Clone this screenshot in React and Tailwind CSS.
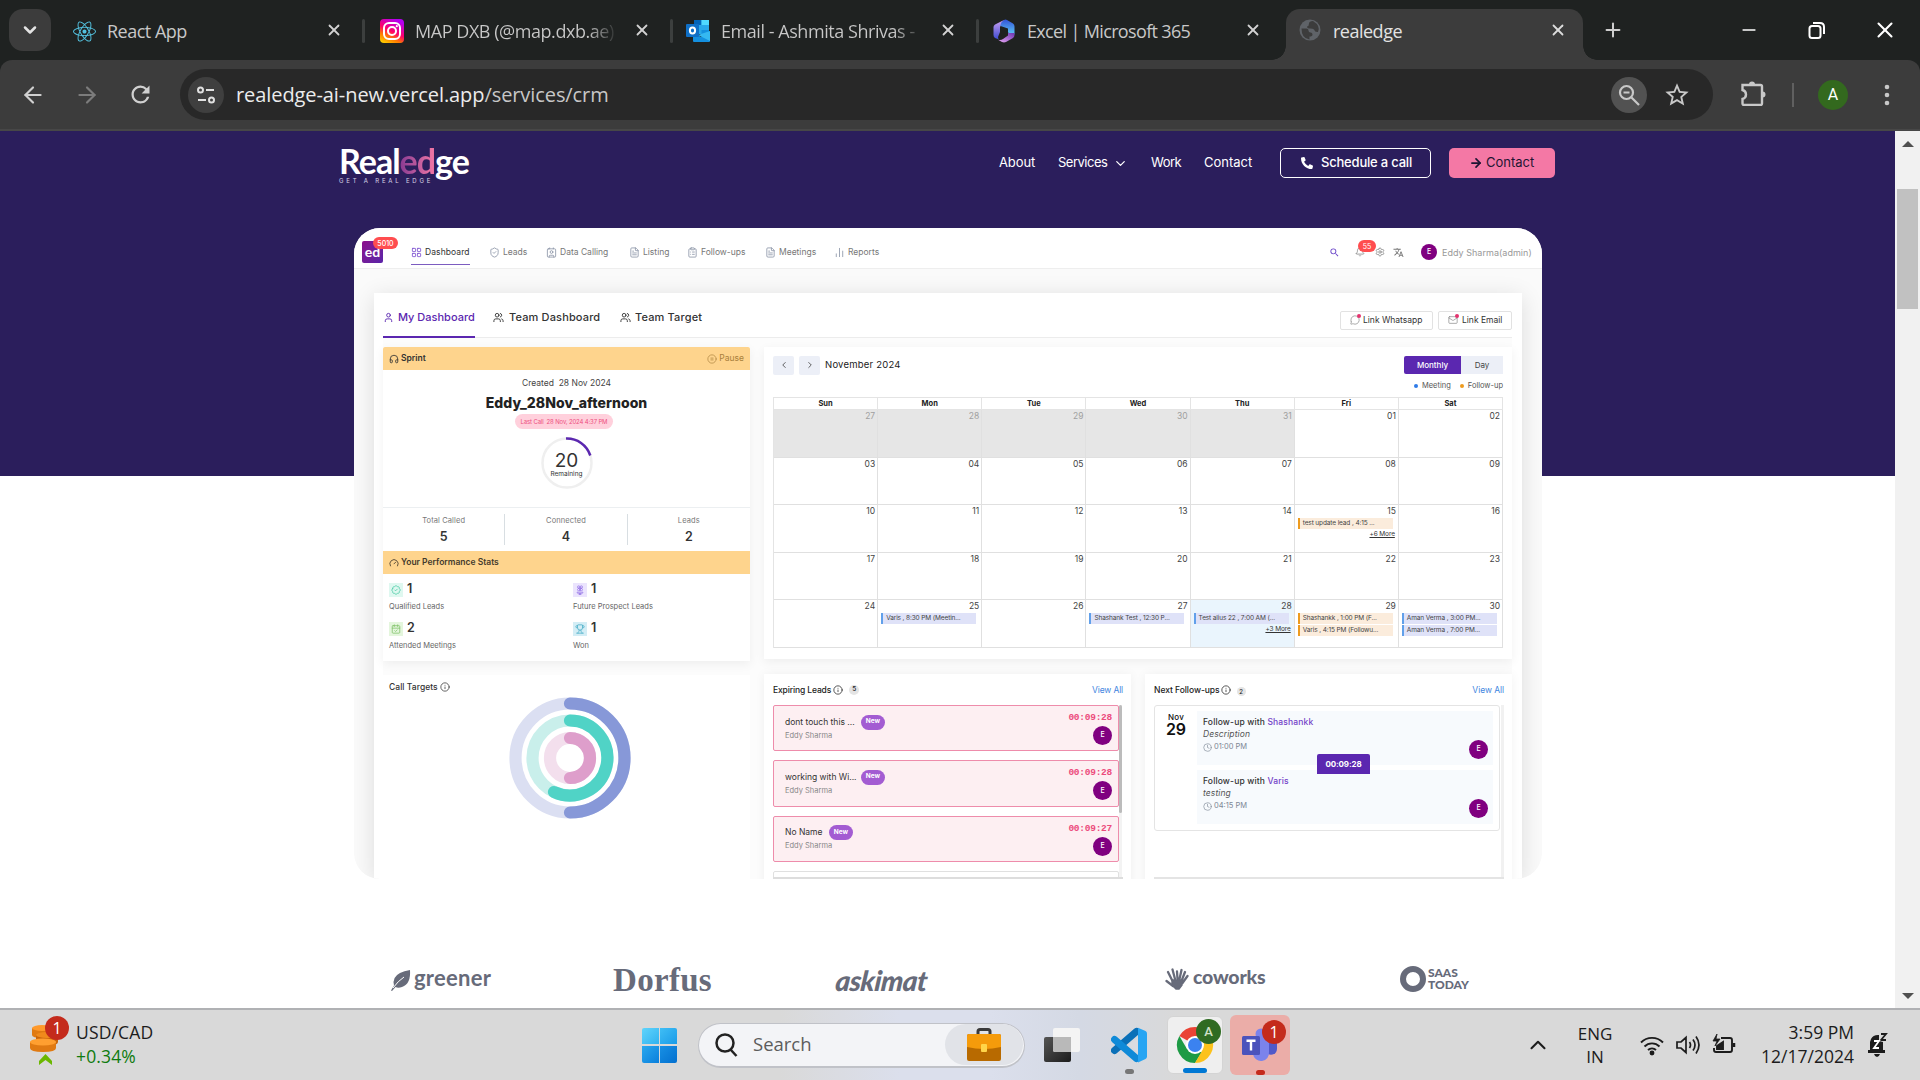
import React from "react";
import {
  ArrowLeft, ArrowRight, X, Plus, ChevronDown, ChevronUp, Minus, LayoutGrid, ShieldCheck,
  Contact, FileText, ClipboardList, BarChart2, Bell, Settings, User, Users, Info, Clock, Headphones,
  CirclePause, Gauge, BadgeCheck, Flower2, CalendarCheck, Trophy, ChevronLeft, ChevronRight, Mail, MessageCircle,
} from "lucide-react";
import { FaReact, FaPhoneAlt } from "react-icons/fa";
import { MdTranslate, MdRefresh, MdStarBorder, MdSearch } from "react-icons/md";

/* ---------- logos ---------- */

const InstagramLogo = () => (
  <svg width="24" height="24" viewBox="0 0 24 24">
    <defs>
      <linearGradient id="ig" x1="0.1" y1="1" x2="0.6" y2="0">
        <stop offset="0" stopColor="#ffd600" /><stop offset=".3" stopColor="#ff7a00" />
        <stop offset=".55" stopColor="#ff0169" /><stop offset="1" stopColor="#b500f0" />
      </linearGradient>
    </defs>
    <rect width="24" height="24" rx="4" fill="url(#ig)" />
    <rect x="4" y="4" width="16" height="16" rx="5" fill="none" stroke="#fff" strokeWidth="2" />
    <circle cx="12" cy="12" r="4" fill="none" stroke="#fff" strokeWidth="2" />
    <circle cx="16.8" cy="7.2" r="1.1" fill="#fff" />
  </svg>
);

const OutlookLogo = () => (
  <svg width="24" height="24" viewBox="0 0 24 24">
    <rect x="8" y="1" width="15" height="14" rx="1" fill="#28a8ea" />
    <path d="M8 1h7.500v5H8z" fill="#0364b8" /><path d="M15.500 1H23v5h-7.500z" fill="#50d9ff" />
    <path d="M15.500 11H23v4h-7.500z" fill="#1490df" />
    <path d="M7 13l8 5 9-6v10a1 1 0 0 1-1 1H8a1 1 0 0 1-1-1z" fill="#1490df" />
    <path d="M24 12v10L12 16z" fill="#35b8f1" />
    <rect x="0" y="5" width="13" height="13" rx="1" fill="#0f6fc6" />
    <ellipse cx="6.500" cy="11.500" rx="2.600" ry="3.100" fill="none" stroke="#fff" strokeWidth="2" />
  </svg>
);

const M365Logo = () => (
  <svg width="24" height="24" viewBox="0 0 24 24">
    <defs>
      <linearGradient id="ma" x1="0" y1="0" x2="0" y2="1"><stop offset="0" stopColor="#c9a0f2" /><stop offset="1" stopColor="#3b4ad0" /></linearGradient>
      <linearGradient id="mb" x1="0" y1="0" x2="0" y2="1"><stop offset="0" stopColor="#3454d8" /><stop offset="1" stopColor="#5fd0f8" /></linearGradient>
      <linearGradient id="mc" x1="0" y1="1" x2="1" y2="0"><stop offset="0" stopColor="#e9a8f5" /><stop offset="1" stopColor="#6a34b0" /></linearGradient>
    </defs>
    <path d="M12 1 3 5.500Q1.500 6.500 1.500 8v8q0 2 1.500 3l4 1.500q-1-1-1-2.500l2-5V8z" fill="url(#ma)" />
    <path d="M12 1q1.500-.8 3 0l6 3.500q1.500 1 1.500 3V14q0 1.500-1 2.500l-5.500-3V9.500L8.500 7q0-4 3.500-6z" fill="url(#mb)" />
    <path d="M22.500 14v2q0 2-1.500 3l-7 4q-2 .8-4 0l-4-2.300q3 .8 5-.7l5-3.500V14z" fill="url(#mc)" />
  </svg>
);

const Globe = () => (
  <svg width="22" height="22" viewBox="0 0 22 22">
    <circle cx="11" cy="11" r="10.500" fill="#5f6368" />
    <path d="M2.500 9.500h5q2 0 2 2t2 2q2 0 2 2t-3 2v3q-8-1-8-11zM14 2q-4 0-4 2.500T8 7.500q0 2 3 2t4 1q1 3 4 2.500 3-6-5-11z" fill="#3c3c3c" />
  </svg>
);

const VSCode = () => (
  <svg width="36" height="36" viewBox="0 0 36 36" fill="none">
    <path d="M25.500 4.500 3.500 23.500" stroke="#0a70b8" strokeWidth="7" strokeLinecap="round" />
    <path d="M3.500 12.500 25.500 31.500" stroke="#0f8ad8" strokeWidth="7" strokeLinecap="round" />
    <path d="M27 10.500v15L18 18z" fill="#d9dbe0" />
    <path d="M27 .8 34.500 4q1.500.8 1.500 2.500v23q0 1.700-1.500 2.500L27 35.600z" fill="#27a5f3" />
  </svg>
);

const Chrome = () => (
  <svg width="38" height="38" viewBox="0 0 38 38">
    <path d="M19 19 3.400 10A18 18 0 0 1 34.600 10z" fill="#ea4335" />
    <path d="M11 23 3.400 10A18 18 0 0 0 19 37l7-11z" fill="#1e9b45" />
    <path d="M19 37A18 18 0 0 0 34.600 10H19l7.800 13.500z" fill="#fcc21b" />
    <circle cx="19" cy="19" r="9" fill="#fff" /><circle cx="19" cy="19" r="7" fill="#3b82f0" />
  </svg>
);

const Teams = () => (
  <svg width="36" height="34" viewBox="0 0 36 34">
    <circle cx="19" cy="6" r="5.500" fill="#7b83eb" />
    <path d="M24 12h11v9a6 6 0 0 1-9 5z" fill="#5059c9" />
    <path d="M11 11h16v13a8 8 0 0 1-16 2z" fill="#7b83eb" />
    <rect x="0" y="8" width="18" height="19" rx="1.500" fill="#4b53bc" />
    <path d="M4.500 12.800h9M9 12.800V22.500" stroke="#fff" strokeWidth="2.400" />
  </svg>
);

const Coins = () => (
  <svg width="30" height="44" viewBox="0 0 30 44">
    <path d="M2 4v7q0 3 10 3t10-3V4z" fill="#e07a12" /><ellipse cx="12" cy="4" rx="10" ry="3" fill="#ff9a2b" />
    <path d="M6 11v7q0 3.500 11 3.500T28 18v-7z" fill="#c9650a" /><ellipse cx="17" cy="11" rx="11" ry="3" fill="#f08a1c" />
    <path d="M0 18v6q0 4 13 4t13-4v-6z" fill="#e07a12" /><ellipse cx="13" cy="18" rx="13" ry="3.500" fill="#ff9f30" />
    <path d="m9 41 6.500-5 6.500 5v-4l-6.500-7L9 37z" fill="#6bb700" />
  </svg>
);

const Briefcase = () => (
  <svg width="36" height="34" viewBox="0 0 36 34">
    <path d="M12 7V3.500q0-2 2-2h8q2 0 2 2V7" fill="none" stroke="#3a3a3a" strokeWidth="3" />
    <rect x="1" y="6" width="34" height="27" rx="2" fill="#b86a00" />
    <path d="M1 8q0-2 2-2h30q2 0 2 2v11q-17 4-34 0z" fill="#f59b0b" />
    <rect x="15" y="16" width="6" height="8" rx="1" fill="#ffd54a" />
  </svg>
);

/* ---------- browser ---------- */

function Tab({ icon, title, fade }) {
  return (
    <div className="flex h-full w-[306px] items-center pt-0.5">
      <span className="flex w-6 justify-center">{icon}</span>
      <span className={fade ? "ml-[11px] w-[203px] whitespace-nowrap bg-[linear-gradient(90deg,#c8c8c8_85%,transparent)] bg-clip-text text-[18px] tracking-[-0.45px] text-transparent" : "ml-[11px] w-[203px] whitespace-nowrap text-[18px] tracking-[-0.5px] text-[#c8c8c8]"}>{title}</span>
      <X className="mb-0.5 ml-[15px]" size={18} strokeWidth={2.4} color="#d2d2d2" />
      <span className="ml-[19px] h-6 w-[3px] rounded bg-[#3c3f3e]" />
    </div>
  );
}

function BrowserChrome() {
  return (
    <header className="h-[131px] bg-[#1f2221] font-['Open_Sans','Noto_Sans',sans-serif]">
      <div className="flex h-[60px] items-center">
        <div className="ml-[9px] flex h-[42px] w-[42px] items-center justify-center rounded-[14px] bg-[#3c3c3c]">
          <ChevronDown size={20} strokeWidth={3} color="#e4e4e4" />
        </div>
        <div className="ml-[21px] flex h-full">
          <Tab icon={<FaReact size={23} color="#53c1de" />} title="React App" />
          <div className="flex pl-0.5"><Tab icon={<InstagramLogo />} title="MAP DXB (@map.dxb.ae)" fade /></div>
          <Tab icon={<OutlookLogo />} title="Email - Ashmita Shrivas -" fade />
          <div className="flex h-full w-[294px] items-center pt-0.5">
            <span className="flex w-6 justify-center"><M365Logo /></span>
            <span className="ml-[11px] w-[202px] whitespace-nowrap text-[18px] tracking-[-0.65px] text-[#c8c8c8]">Excel | Microsoft 365</span>
            <X className="mb-0.5 ml-[15px]" size={18} strokeWidth={2.4} color="#d2d2d2" />
          </div>
        </div>
        <div className="relative mt-[9px] flex h-[51px] w-[297px] items-center rounded-t-[14px] bg-[#3c3c3c] pb-[7px]">
          <span className="absolute -left-[14px] bottom-0 h-[14px] w-[14px] bg-[radial-gradient(circle_at_0_0,transparent_13.5px,#3c3c3c_14px)]" />
          <span className="absolute -right-[14px] bottom-0 h-[14px] w-[14px] bg-[radial-gradient(circle_at_100%_0,transparent_13.5px,#3c3c3c_14px)]" />
          <span className="mb-0.5 ml-[13px]"><Globe /></span>
          <span className="ml-[12px] w-[216px] text-[18px] tracking-[-0.5px] text-[#e3e3e3]">realedge</span>
          <X className="mb-0.5" size={18} strokeWidth={2.4} color="#dcdcdc" />
        </div>
        <Plus className="ml-[19px]" size={22} strokeWidth={2.2} color="#cfcfcf" />
        <Minus className="ml-[115px]" size={20} strokeWidth={2} color="#fff" />
        <svg className="ml-[49px]" width="18" height="18" viewBox="0 0 18 18" fill="none" stroke="#fff" strokeWidth="2">
          <rect x="1.500" y="5" width="11" height="12" rx="2.500" /><path d="M5 2h7q4 0 4 4v7" />
        </svg>
        <X className="ml-[46px]" size={26} strokeWidth={1.9} color="#fff" />
      </div>
      <div className="flex h-[71px] items-center rounded-t-[12px] border-b-2 border-[#474747] bg-[#3c3c3c]">
        <ArrowLeft className="ml-[20px]" size={26} strokeWidth={2} color="#d0d0d0" />
        <ArrowRight className="ml-[28px]" size={26} strokeWidth={2} color="#7c7c7c" />
        <MdRefresh className="ml-[27px]" size={27} color="#d0d0d0" />
        <div className="ml-[26px] flex h-[51px] w-[1533px] items-center rounded-full bg-[#282828]">
          <span className="ml-2 flex h-9 w-9 items-center justify-center rounded-full bg-[#3f3f3f]">
            <svg width="20" height="20" viewBox="0 0 20 20" fill="none" stroke="#e0e0e0" strokeWidth="2">
              <circle cx="4.500" cy="5" r="2.500" /><path d="M10 5h8M2 15h8" /><circle cx="15.500" cy="15" r="2.500" />
            </svg>
          </span>
          <span className="ml-3 w-[1375px] whitespace-nowrap text-[20px] tracking-[-0.08px] text-[#ececec]">realedge-ai-new.vercel.app<span className="text-[#c7c7c7]">/services/crm</span></span>
          <span className="flex h-9 w-9 items-center justify-center rounded-full bg-[#525252]">
            <svg width="24" height="24" viewBox="0 0 24 24" fill="none" stroke="#c8c8c8" strokeWidth="2.200">
              <circle cx="9.500" cy="9.500" r="6.500" /><path d="M14.500 14.500 22 22M6.500 9.500h6" />
            </svg>
          </span>
          <MdStarBorder className="ml-[16px]" size={28} color="#c8c8c8" />
        </div>
        <svg className="-mt-1 ml-[27px]" width="26" height="26" viewBox="0 0 26 26" fill="none" stroke="#c8c8c8" strokeWidth="2.400">
          <path d="M2.500 5h18q1.500 0 1.500 1.500v17q0 1.500-1.500 1.500H4q-1.500 0-1.500-1.500V19q3.500-1 3.500-4.500T2.500 10z" />
          <path d="M9 4.500a3 3 0 0 1 6 0zM22.500 11.500a3 3 0 0 1 0 6z" fill="#c8c8c8" stroke="none" />
        </svg>
        <span className="ml-[26px] h-6 w-0.5 bg-[#606060]" />
        <span className="ml-[24px] flex h-[30px] w-[30px] items-center justify-center rounded-full bg-[#33691e] font-['Roboto',sans-serif] text-[16px] text-white">A</span>
        <svg className="ml-[36px]" width="6" height="24" fill="#c8c8c8"><circle cx="3" cy="4" r="2.300" /><circle cx="3" cy="12" r="2.300" /><circle cx="3" cy="20" r="2.300" /></svg>
      </div>
    </header>
  );
}

/* ---------- site navigation ---------- */

function SiteNav() {
  return (
    <nav className="flex h-[64px] items-center pl-[339px] text-[13px] text-white">
      <div className="mt-[6px] flex h-[38px] w-[660px] flex-col whitespace-nowrap">
        <div className="h-[30px] font-['Lato',sans-serif] text-[34px] font-bold leading-[28px] tracking-[-1px]">
          Real<span className="bg-gradient-to-r from-[#8a3a92] to-[#f478a5] bg-clip-text text-transparent">ed</span>ge
        </div>
        <div className="text-[6px] leading-[9px] tracking-[2.800px] text-[#d8d4e6]">GET A REAL EDGE</div>
      </div>
      <span className="w-[59px] tracking-[-0.1px]">About</span>
      <span className="w-[55px] tracking-[-0.5px]">Services</span>
      <ChevronDown size={15} strokeWidth={2} />
      <span className="ml-[23px] w-[53px] tracking-[-0.5px]">Work</span>
      <span className="w-[76px]">Contact</span>
      <span className="flex h-[30px] w-[151px] items-center rounded-[5px] border border-white pl-5 font-medium tracking-[-0.2px]"><FaPhoneAlt size={12} className="mr-2" />Schedule a call</span>
      <span className="ml-[18px] flex h-[30px] w-[106px] items-center rounded-[5px] bg-[#f478a5] pl-5 text-[#1f1533]"><ArrowRight size={14} strokeWidth={3} className="mr-[3px]" />Contact</span>
    </nav>
  );
}

/* ---------- dashboard ---------- */

const Avatar = ({ className }) => (
  <span className={`flex h-[19px] w-[19px] shrink-0 items-center justify-center rounded-full bg-[#800080] text-[7px] font-medium text-white ${className || ""}`}>E</span>
);

function TopItem({ icon: Icon, label, width }) {
  return (
    <div className={`flex items-center ${width}`}>
      <Icon size={11} strokeWidth={1.8} color="#8a94a6" />
      <span className="ml-[3px] whitespace-nowrap text-[8.500px]">{label}</span>
    </div>
  );
}

function TopBar() {
  return (
    <div className="flex h-[41px] items-center border-b border-[#eeeeee] bg-white pt-2 pl-2 text-[8.500px] text-[#777]">
      <div className="relative flex h-[22px] w-[21px] items-center justify-center rounded-[2px] bg-gradient-to-br from-[#8c0a8c] to-[#5a22a8] font-['Lato',sans-serif] text-[14px] font-bold leading-none text-white">
        ed
        <span className="absolute -top-[4px] left-[11px] flex h-3 w-[25px] items-center justify-center rounded-full bg-[#ff4d4f] font-['Inter',sans-serif] text-[7px] font-medium leading-none">5010</span>
      </div>
      <div className="relative ml-[28px] flex w-[78px] items-center text-[#333]">
        <LayoutGrid size={11} strokeWidth={1.8} color="#7c4fd0" />
        <span className="ml-[3px] tracking-[0.08px]">Dashboard</span>
        <span className="absolute top-[18px] left-0 h-px w-[59px] bg-[#7c5cc0]" />
      </div>
      <TopItem icon={ShieldCheck} label="Leads" width="w-[57px]" />
      <TopItem icon={Contact} label="Data Calling" width="w-[83px]" />
      <TopItem icon={FileText} label="Listing" width="w-[58px]" />
      <TopItem icon={ClipboardList} label="Follow-ups" width="w-[78px]" />
      <TopItem icon={FileText} label="Meetings" width="w-[69px]" />
      <TopItem icon={BarChart2} label="Reports" width="w-[495px]" />
      <MdSearch size={11} color="#6a45c8" />
      <span className="relative ml-[15px]">
        <Bell size={10} strokeWidth={1.7} />
        <span className="absolute -top-[7px] left-[3px] flex h-3 w-[18px] items-center justify-center rounded-full bg-[#ff4d4f] text-[7px] leading-none text-white">55</span>
      </span>
      <Settings className="ml-[10px]" size={10} strokeWidth={1.7} />
      <MdTranslate className="ml-2" size={11} />
      <span className="ml-[17px] flex h-4 w-4 items-center justify-center rounded-full bg-[#800080] text-[7px] font-medium text-white">E</span>
      <span className="ml-[5px] whitespace-nowrap pt-px text-[9px] tracking-[0.03px] text-[#999]">Eddy Sharma(admin)</span>
    </div>
  );
}

function PanelTabs() {
  return (
    <div className="flex h-[45px] items-center border-b border-[#ececec] pt-[4px] text-[11px] font-medium text-[#333]">
      <div className="relative flex w-[110px] items-center whitespace-nowrap text-[#5b27b0]">
        <User size={11} strokeWidth={2} /><span className="ml-1">My Dashboard</span>
        <span className="absolute top-[27px] left-0 h-0.5 w-[92px] bg-[#5b27b0]" />
      </div>
      <div className="flex w-[127px] items-center whitespace-nowrap"><Users size={11} strokeWidth={2} /><span className="ml-[5px] tracking-[0.15px]">Team Dashboard</span></div>
      <div className="flex w-[720px] items-center whitespace-nowrap"><Users size={11} strokeWidth={2} /><span className="ml-1 tracking-[0.15px]">Team Target</span></div>
      <div className="mt-[6px] flex h-[19px] w-[93px] items-center rounded-[2px] border border-[#e2e2e2] pl-[9px] text-[8.500px] font-normal">
        <span className="relative mr-[3px]"><MessageCircle size={10} strokeWidth={1.7} color="#888" /><span className="absolute -top-px -right-px h-1 w-1 rounded-full bg-[#e4326e]" /></span>
        <span className="whitespace-nowrap">Link Whatsapp</span>
      </div>
      <div className="mt-[6px] ml-[5px] flex h-[19px] w-[74px] items-center rounded-[2px] border border-[#e2e2e2] pl-[9px] text-[8.500px] font-normal">
        <span className="relative mr-[4px]"><Mail size={10} strokeWidth={1.7} color="#888" /><span className="absolute -top-px -right-px h-1 w-1 rounded-full bg-[#e4326e]" /></span>
        <span className="whitespace-nowrap">Link Email</span>
      </div>
    </div>
  );
}

function Stat({ icon: Icon, value, label, tile, color }) {
  return (
    <div className="h-[38.500px] w-[184px]">
      <div className="flex h-[14px] items-center">
        <span className={`flex h-[14px] w-[14px] items-center justify-center ${tile}`}><Icon size={10} strokeWidth={1.9} color={color} /></span>
        <span className="ml-1 pb-px text-[12.500px] font-semibold text-[#333]">{value}</span>
      </div>
      <div className="mt-[5px] text-[7.500px] leading-[10px] text-[#666]">{label}</div>
    </div>
  );
}

function SprintCard() {
  return (
    <section className="h-[314px] w-[367px] bg-white shadow-[0_3px_10px_rgba(0,0,0,0.06)]">
      <div className="flex h-[23px] items-center rounded-t-[2px] bg-[#fed48d] px-[6px] text-[8.500px]">
        <Headphones size={10} strokeWidth={2} color="#333" /><span className="ml-0.5 font-semibold text-[#333]">Sprint</span>
        <CirclePause className="ml-auto" size={10} strokeWidth={1.6} color="#a9803c" /><span className="ml-0.5 text-[#a9803c]">Pause</span>
      </div>
      <div className="flex h-[138px] flex-col items-center border-b border-[#eceff1] pt-[7px]">
        <div className="text-[8.500px] leading-3 text-[#444] whitespace-pre">Created  28 Nov 2024</div>
        <div className="mt-[6px] text-[14px] font-extrabold leading-4 tracking-[0.05px] text-[#222]">Eddy_28Nov_afternoon</div>
        <div className="mt-[3px] -ml-[5px] flex h-[15px] w-[98px] items-center justify-center whitespace-pre rounded-full bg-[#ffd0dc] text-[6px] tracking-[-0.15px] text-[#ee4f80]">Last Call  28 Nov, 2024 4:37 PM</div>
        <div className="relative mt-2 h-[52px] w-[52px]">
          <svg width="52" height="52" viewBox="0 0 52 52" fill="none" strokeWidth="2.500">
            <circle cx="26" cy="26" r="24.500" stroke="#efefef" /><path d="M25 1.500A24.500 24.500 0 0 1 49.300 18.500" stroke="#5b27b0" />
          </svg>
          <div className="absolute inset-0 flex flex-col items-center pt-[15px] text-[#333]">
            <span className="text-[19px] leading-[18px]">20</span><span className="text-[6.500px] leading-2">Remaining</span>
          </div>
        </div>
      </div>
      <div className="grid h-[43px] grid-cols-3 py-[6px] text-center">
        {[["Total Called", 5], ["Connected", 4], ["Leads", 2]].map(([l, v], i) => (
          <div key={l} className={i < 2 ? "border-r border-[#d8dee2]" : ""}>
            <div className="pt-px text-[7.500px] leading-3 tracking-[0.1px] text-[#777]">{l}</div>
            <div className="mt-[3px] text-[12.500px] font-semibold leading-[14px] text-[#333]">{v}</div>
          </div>
        ))}
      </div>
      <div className="flex h-[23px] items-center bg-[#fed48d] px-[6px] text-[8.500px] font-semibold text-[#433a2c]">
        <Gauge size={10} strokeWidth={2} /><span className="ml-0.5">Your Performance Stats</span>
      </div>
      <div className="flex flex-wrap pt-[9px] pl-[6px]">
        <Stat icon={BadgeCheck} value="1" label="Qualified Leads" tile="bg-[#dff8f0]" color="#47caa4" />
        <div className="w-[170px]"><Stat icon={Flower2} value="1" label="Future Prospect Leads" tile="bg-[#ebe4fd]" color="#9a7ae8" /></div>
        <Stat icon={CalendarCheck} value="2" label="Attended Meetings" tile="bg-[#e4f6dd]" color="#83c46c" />
        <div className="w-[170px]"><Stat icon={Trophy} value="1" label="Won" tile="bg-[#d3edf5]" color="#4bafc9" /></div>
      </div>
    </section>
  );
}

const events = {
  15: { list: ["test update lead , 4:15 ..."], kind: "follow", more: "+6 More" },
  25: { list: ["Varis , 8:30 PM (Meetin..."], kind: "meet" },
  27: { list: ["Shashank Test , 12:30 P..."], kind: "meet" },
  28: { list: ["Test alius 22 , 7:00 AM (..."], kind: "meet", more: "+3 More" },
  29: { list: ["Shashankk , 1:00 PM (F...", "Varis , 4:15 PM (Followu..."], kind: "follow" },
  30: { list: ["Aman Verma , 3:00 PM...", "Aman Verma , 7:00 PM..."], kind: "meet" },
};
const days = ["27", "28", "29", "30", "31"].map((d) => ({ d, off: true })).concat(
  Array.from({ length: 30 }, (_, i) => ({ d: String(i + 1).padStart(2, "0") }))
);

function CalendarCard() {
  return (
    <section className="h-[312px] w-[748px] bg-white px-[9px] pt-[9px] shadow-[0_3px_10px_rgba(0,0,0,0.06)]">
      <div className="flex h-[18px] items-center text-[8.500px] text-[#444]">
        <span className="flex h-[19px] w-[21px] items-center justify-center rounded-[2px] bg-[#eceff7]"><ChevronLeft size={10} /></span>
        <span className="ml-[5px] flex h-[19px] w-[21px] items-center justify-center rounded-[2px] bg-[#eceff7]"><ChevronRight size={10} /></span>
        <span className="ml-[5px] text-[9.500px] tracking-[0.22px] text-[#222]">November 2024</span>
        <span className="ml-auto flex h-[18px] w-[57px] items-center justify-center rounded-l-[2px] bg-[#5b27b0] text-[8px] font-medium text-white">Monthly</span>
        <span className="flex h-[18px] w-[42px] items-center justify-center bg-[#eceff7] text-[8px]">Day</span>
      </div>
      <div className="flex h-[23px] items-center justify-end pt-px text-[7.500px] text-[#555]">
        <span className="mr-1 h-[4px] w-[4px] rounded-full bg-[#2f7be8]" />Meeting
        <span className="mr-1 ml-[9px] h-[4px] w-[4px] rounded-full bg-[#ee9b1e]" />Follow-up
      </div>
      <div className="grid h-[251px] grid-cols-7 grid-rows-[12px_repeat(5,1fr)] border-t border-l border-[#e4e4e4]">
        {["Sun", "Mon", "Tue", "Wed", "Thu", "Fri", "Sat"].map((d) => (
          <div key={d} className="flex items-center justify-center border-r border-b border-[#e4e4e4] text-[7.500px] font-bold text-[#222]">{d}</div>
        ))}
        {days.map(({ d, off }, i) => {
          const e = off ? null : events[d];
          return (
            <div key={i} className={`min-h-0 min-w-0 border-r border-b border-[#e0e0e0] ${off ? "bg-[#e6e6e6]" : d === "28" ? "bg-[#eaf5fd]" : ""}`}>
              <div className={`h-[13px] pt-px pr-[2px] text-right text-[8.500px] leading-[10px] ${off ? "text-[#a0a0a0]" : "text-[#444]"}`}>{d}</div>
              {e && e.list.map((t) => (
                <div key={t} className={`mb-px ml-[3px] flex h-[11px] w-[95px] items-center overflow-hidden whitespace-nowrap border-l-2 pl-[3px] text-[6.500px] tracking-[-0.12px] text-[#444] ${e.kind === "meet" ? "border-[#61a0ea] bg-[#dfe2f8]" : "border-[#ee9b1e] bg-[#fbecdc]"}`}>{t}</div>
              ))}
              {e && e.more && <div className="pr-[3px] text-right text-[6.500px] leading-[9px] tracking-[-0.1px] text-[#333] underline">{e.more}</div>}
            </div>
          );
        })}
      </div>
    </section>
  );
}

function CallTargets() {
  return (
    <section className="h-[220px] w-[367px] bg-white pt-[6px] pl-[6px]">
      <div className="flex h-3 items-center text-[8.500px] font-medium tracking-[0.05px] text-[#333]">Call Targets<Info className="ml-[2px]" size={10} strokeWidth={1.8} /></div>
      <svg className="mt-[3px] ml-[118.500px]" width="124" height="124" viewBox="-62 -62 124 124" fill="none" strokeWidth="12.200">
        <circle r="54.500" stroke="#dbdff2" /><circle r="37.500" stroke="#c9efeb" /><circle r="20" stroke="#f3dfed" />
        <g strokeLinecap="round">
          <path d="M0-54.500A54.500 54.500 0 0 1 0 54.500" stroke="#8798d8" />
          <path d="M0-37.500A37.500 37.500 0 1 1-16 34" stroke="#50d3c6" />
          <path d="M0-20A20 20 0 0 1 0 20" stroke="#de9ecb" />
        </g>
      </svg>
    </section>
  );
}

function LeadCard({ name, time, nameW }) {
  return (
    <div className="mb-[9px] flex h-[46.300px] w-[346px] justify-between rounded-[2px] border border-[#ee8cab] bg-[#fdeff2] pl-[11px] pr-[6px]">
      <div className="pt-[8.500px]">
        <div className="flex h-[15px] items-center text-[8.500px] text-[#333]">
          <span className={`whitespace-nowrap ${nameW}`}>{name}</span>
          <span className="flex h-[15px] w-[24px] items-center justify-center rounded-full bg-[#a35cd2] text-[6.500px] font-bold text-white">New</span>
        </div>
        <div className="text-[7.500px] leading-3 text-[#888]">Eddy Sharma</div>
      </div>
      <div className="flex flex-col items-end pt-[6px]">
        <span className="font-['Liberation_Mono',monospace] text-[9.500px] font-bold leading-3 tracking-[-0.25px] text-[#ec4b7c]">{time}</span>
        <Avatar className="mt-[2px]" />
      </div>
    </div>
  );
}

function ExpiringLeads() {
  return (
    <section className="h-[220px] w-[367px] bg-white pt-[10px] pl-[9px] pr-2 shadow-[0_0_10px_rgba(0,0,0,0.05)]">
      <div className="flex h-3 items-center text-[8.500px] font-medium tracking-[-0.13px] text-[#222]">
        Expiring Leads<Info className="ml-[2px]" size={10} strokeWidth={1.8} />
        <span className="ml-[6px] flex h-[10px] w-[10px] items-center justify-center rounded-full bg-[#e4e4e4] text-[6.500px]">5</span>
        <span className="ml-auto font-normal text-[#3f86e0]">View All</span>
      </div>
      <div className="mt-[9px] flex h-[174px] overflow-hidden border-b-2 border-[#dddddd]">
        <div className="w-[346px] shrink-0">
          <LeadCard name="dont touch this ..." time="00:09:28" nameW="w-[76px]" />
          <LeadCard name="working with Wi..." time="00:09:28" nameW="w-[76px]" />
          <LeadCard name="No Name" time="00:09:27" nameW="w-[44px]" />
          <div className="h-5 w-[346px] rounded-[2px] border border-[#e0e0e0]" />
        </div>
        <div className="h-full w-[3px] bg-[#f3f3f3]"><div className="h-[108px] w-[3px] rounded-full bg-[#bcbcbc]" /></div>
      </div>
    </section>
  );
}

function FollowRow({ who, note, time }) {
  return (
    <div className="flex h-[54px] items-end justify-between bg-[#f7fafd] pl-[6px] pr-[5px] pb-[6px] text-[8.500px]">
      <div className="h-[43.500px]">
        <div className="leading-[12px] font-medium tracking-[0.15px] text-[#333]">Follow-up with <span className="text-[#7341c8]">{who}</span></div>
        <div className="leading-[13px] italic tracking-[0.1px] text-[#555]">{note}</div>
        <div className="flex h-[13px] items-center text-[7.500px] text-[#7d8795]"><Clock size={9} strokeWidth={1.7} className="mr-[2px]" />{time}</div>
      </div>
      <Avatar />
    </div>
  );
}

function NextFollowUps() {
  return (
    <section className="h-[220px] w-[367px] bg-white pt-[10px] pl-[9px] pr-2 shadow-[0_0_10px_rgba(0,0,0,0.05)]">
      <div className="flex h-3 items-center text-[8.500px] font-medium tracking-[-0.05px] text-[#222]">
        Next Follow-ups<Info className="ml-[1px]" size={10} strokeWidth={1.8} />
        <span className="mt-0.5 ml-[6px] flex h-[9px] w-[9px] items-center justify-center rounded-full bg-[#e4e4e4] text-[6px]">2</span>
        <span className="ml-auto font-normal text-[#3f86e0]">View All</span>
      </div>
      <div className="mt-[9px] flex h-[174px] justify-between border-b-2 border-[#e4e4e4]">
        <div className="relative flex h-[126px] w-[346px] rounded-[3px] border border-[#e4e4e4] pt-[5px]">
          <div className="w-[42px] pt-[2px] text-center text-[#111]">
            <div className="text-[8px] font-medium leading-[9px] tracking-[0.3px]">Nov</div>
            <div className="text-[16px] font-semibold leading-[15px]">29</div>
          </div>
          <div className="flex w-[296px] flex-col gap-[5px]">
            <FollowRow who="Shashankk" note="Description" time="01:00 PM" />
            <FollowRow who="Varis" note="testing" time="04:15 PM" />
          </div>
          <span className="absolute top-[48px] left-[162px] flex h-5 w-[53px] items-center justify-center rounded-t-[2px] bg-[#5b27b0] text-[8px] font-bold tracking-[-0.1px] text-white">00:09:28</span>
        </div>
        <div className="h-full w-[3px] bg-[#f1f1f1]" />
      </div>
    </section>
  );
}

function Dashboard() {
  return (
    <div className="h-[651px] w-[1188px] overflow-hidden rounded-[26px] bg-[#fafafa] text-[#333]">
      <TopBar />
      <div className="mt-[24px] ml-5 h-[586px] w-[1148px] bg-white pl-[9px] pr-[10px] shadow-[0_4px_22px_rgba(0,0,0,0.12)]">
        <PanelTabs />
        <div className="flex flex-wrap justify-between bg-[#fcfcfc]">
          <div className="mt-[9px]"><SprintCard /><div className="mt-[14px]"><CallTargets /></div></div>
          <div className="mt-[9px]">
            <CalendarCard />
            <div className="mt-[15px] flex justify-between"><ExpiringLeads /><NextFollowUps /></div>
          </div>
        </div>
      </div>
    </div>
  );
}

function ClientLogos() {
  return (
    <div className="mt-[82px] flex h-9 items-center pl-[390px] whitespace-nowrap text-[#676b7a]">
      <div className="flex w-[223px] items-center">
        <svg className="mt-0.5" width="21" height="22" viewBox="0 0 21 22" fill="#676b7a">
          <path d="M20 1q1 14-8 17-4 1.500-6.500 0L2 22l-1-.5 3-5Q2 8 10 4q4-2 10-3z" /><path d="M3 19Q8 12 14 8" stroke="#fff" strokeWidth="1" fill="none" />
        </svg>
        <span className="ml-[3px] pb-1 font-['Lato',sans-serif] text-[22px] font-bold tracking-[0.250px]">greener</span>
      </div>
      <div className="w-[223px] pt-1 font-['Liberation_Serif',serif] text-[33px] font-bold tracking-[0.3px]">Dorfus</div>
      <div className="w-[329px] -skew-x-6 pt-0.5 font-['Lato',sans-serif] text-[28px] font-black italic tracking-[-0.5px]">askimat</div>
      <div className="flex w-[235px] items-center">
        <svg width="24" height="22" viewBox="0 0 24 22" fill="none" stroke="#676b7a" strokeLinecap="round">
          <path d="M3 4 7 12M7.500 1.500 10 11M12 3.500 12.500 11M16.500 2 14.500 11M20 4 16.500 13M22.500 8l-5 7M1.500 13 8 18" strokeWidth="2.300" />
          <path d="M7 12h9.500l.5 5-3 4h-3l-4-4z" fill="#676b7a" strokeWidth="1.500" />
        </svg>
        <span className="ml-1 pb-1 font-['Lato',sans-serif] text-[19.500px] font-black tracking-[-0.2px]">coworks</span>
      </div>
      <span className="h-[26px] w-[26px] rounded-full border-[6.500px] border-[#676b7a]" />
      <div className="ml-[2px] font-['Lato',sans-serif] text-[12px] font-black leading-[12px]">SAAS<br />TODAY</div>
    </div>
  );
}

/* ---------- taskbar ---------- */

function Taskbar() {
  return (
    <footer className="flex h-[72px] items-center border-t-2 border-[#b0b1b4] bg-[linear-gradient(90deg,#d9d9d9_0,#d9d9d9_780px,#dbdfec_900px,#dbdfec_990px,#d4d9e4_1080px,#d9d9d9_1180px)] font-['Open_Sans','Noto_Sans',sans-serif] text-[#1c1c1c]">
      <div className="relative ml-[30px] w-[46px] pt-px"><Coins />
        <span className="absolute -top-[7px] left-[15px] flex h-6 w-6 items-center justify-center rounded-full bg-[#c42b1c] text-[16px] text-white">1</span>
      </div>
      <div className="w-[566px] pb-0.5 text-[17.500px] leading-[24px] tracking-[0.15px]">USD/CAD<div className="text-[#0f7b0f]">+0.34%</div></div>
      <div className="grid h-[35px] w-[35px] grid-cols-2 gap-[1.500px]">
        <span className="rounded-tl-[2px] bg-gradient-to-br from-[#5fd4fb] to-[#2fb2f0]" /><span className="rounded-tr-[2px] bg-gradient-to-br from-[#3fbef5] to-[#189be8]" />
        <span className="rounded-bl-[2px] bg-gradient-to-br from-[#29a8ee] to-[#0a7fdc]" /><span className="rounded-br-[2px] bg-gradient-to-br from-[#1890e4] to-[#0470cf]" />
      </div>
      <div className="ml-[21px] flex h-[45px] w-[327px] items-center rounded-full border border-b-2 border-[#c0c2c8] bg-[#f3f4f7]">
        <svg className="ml-[15px]" width="24" height="24" viewBox="0 0 24 24" fill="none" stroke="#222" strokeWidth="2.500"><circle cx="11" cy="10" r="8.500" /><path d="m16.500 16.500 6 6.500" /></svg>
        <span className="ml-[15px] w-[192px] pb-px text-[18.500px] text-[#5c5c5c]">Search</span>
        <span className="flex h-[41px] w-[78px] items-center justify-center rounded-full bg-[#e1e3e8]"><Briefcase /></span>
      </div>
      <svg className="ml-[19px]" width="38" height="36" viewBox="0 0 38 36">
        <defs><linearGradient id="tv" x1="0" y1="0" x2="1" y2="1"><stop offset="0" stopColor="#555" /><stop offset="1" stopColor="#1c1c1c" /></linearGradient></defs>
        <rect x="0" y="10" width="27" height="25" rx="2" fill="url(#tv)" /><rect x="9" y="1" width="27" height="24" rx="2" fill="#f4f4f4" /><path d="M9 10h18v15H11q-2 0-2-2z" fill="#b9b9b9" />
      </svg>
      <div className="relative ml-[29px]"><VSCode /><span className="absolute -bottom-[11px] left-[14px] h-[5px] w-[9px] rounded-full bg-[#777]" /></div>
      <div className="relative ml-[20px] flex h-[58px] w-[56px] items-center justify-center rounded-[6px] border border-[#d4d4d4] bg-[#efefef]"><Chrome />
        <span className="absolute top-[2px] left-[28px] flex h-[25px] w-[25px] items-center justify-center rounded-full bg-[#2f6b22] font-['Roboto',sans-serif] text-[13px] font-medium text-[#cfe0c8]">A</span>
        <span className="absolute bottom-0 h-[5px] w-6 rounded-full bg-[#0078d4]" />
      </div>
      <div className="relative ml-[7px] flex h-[60px] w-[60px] items-center justify-center rounded-[6px] bg-[#ebada8]"><Teams />
        <span className="absolute top-[5px] left-[32px] flex h-6 w-6 items-center justify-center rounded-full bg-[#c42b1c] text-[16px] text-white">1</span>
        <span className="absolute bottom-0 h-[5px] w-[9px] rounded-full bg-[#c42b1c]" />
      </div>
      <ChevronUp className="ml-[235px]" size={26} strokeWidth={1.9} />
      <div className="ml-[22px] w-[44px] pb-px text-center text-[17px] leading-[23px]">ENG<br />IN</div>
      <svg className="ml-[22px]" width="26" height="24" viewBox="0 0 26 24" fill="none" stroke="#1c1c1c" strokeWidth="1.900">
        <path d="M2 9.500a15.500 15.500 0 0 1 22 0M5.500 13.500a10.500 10.500 0 0 1 15 0M9 17a6 6 0 0 1 8 0" /><circle cx="13" cy="20" r="1.500" fill="#1c1c1c" />
      </svg>
      <svg className="ml-[10px]" width="26" height="24" viewBox="0 0 26 24" fill="none" stroke="#1c1c1c" strokeWidth="1.700">
        <path d="M2 9v6h4l5 4.500v-15L6 9zM14.500 9q2 3 0 6M18 6.500q4 5.500 0 11M21 3.500q6 8.500 0 17" />
      </svg>
      <svg className="ml-[9px]" width="26" height="24" viewBox="0 0 26 24" fill="none" stroke="#1c1c1c" strokeWidth="1.900">
        <path d="M11 5h9q2 0 2 2v10q0 2-2 2H6q-2 0-2-2v-2" /><path d="M7 16V13l6-4v7z" fill="#1c1c1c" /><path d="M24 10v4" strokeWidth="2.500" /><path d="M7 1 3 8h4l-2 5 5-7H6z" fill="#1c1c1c" strokeWidth=".8" />
      </svg>
      <div className="ml-[16px] w-[102px] whitespace-nowrap pb-0.5 text-right text-[17.500px] leading-[24px]">3:59 PM<br />12/17/2024</div>
      <svg className="ml-[13px]" width="22" height="26" viewBox="0 0 22 26">
        <path d="M4 7q2-4 7-4h1v6l4 1v8h2v3H1v-3h2v-8z" fill="#1c1c1c" /><path d="M7 22h6q-1 3-3 3t-3-3z" fill="#1c1c1c" />
        <path d="M14 2h5l-5 6h5" fill="none" stroke="#1c1c1c" strokeWidth="1.800" /><path d="M7 9h5l-5 7h5" fill="none" stroke="#fff" strokeWidth="1.800" />
      </svg>
    </footer>
  );
}

export default function App() {
  return (
    <div className="h-[1080px] w-[1920px] overflow-hidden bg-white">
      <BrowserChrome />
      <div className="flex h-[877px] font-['Inter','Liberation_Sans',sans-serif]">
        <main className="h-full w-[1895px] overflow-hidden bg-[linear-gradient(#2b1e5c_0,#2b1e5c_345px,#ffffff_345px)]">
          <SiteNav />
          <div className="mt-[33px] ml-[354px]"><Dashboard /></div>
          <ClientLogos />
        </main>
        <div className="flex h-full w-[25px] flex-col items-center bg-[#f1f1f1]">
          <svg className="mt-[10px]" width="12" height="6"><path d="M0 6 6 0l6 6z" fill="#505050" /></svg>
          <span className="mt-[42px] h-[120px] w-[21px] bg-[#c1c1c1]" />
          <svg className="mt-auto mb-[9px]" width="12" height="6"><path d="m0 0 6 6 6-6z" fill="#505050" /></svg>
        </div>
      </div>
      <Taskbar />
    </div>
  );
}
